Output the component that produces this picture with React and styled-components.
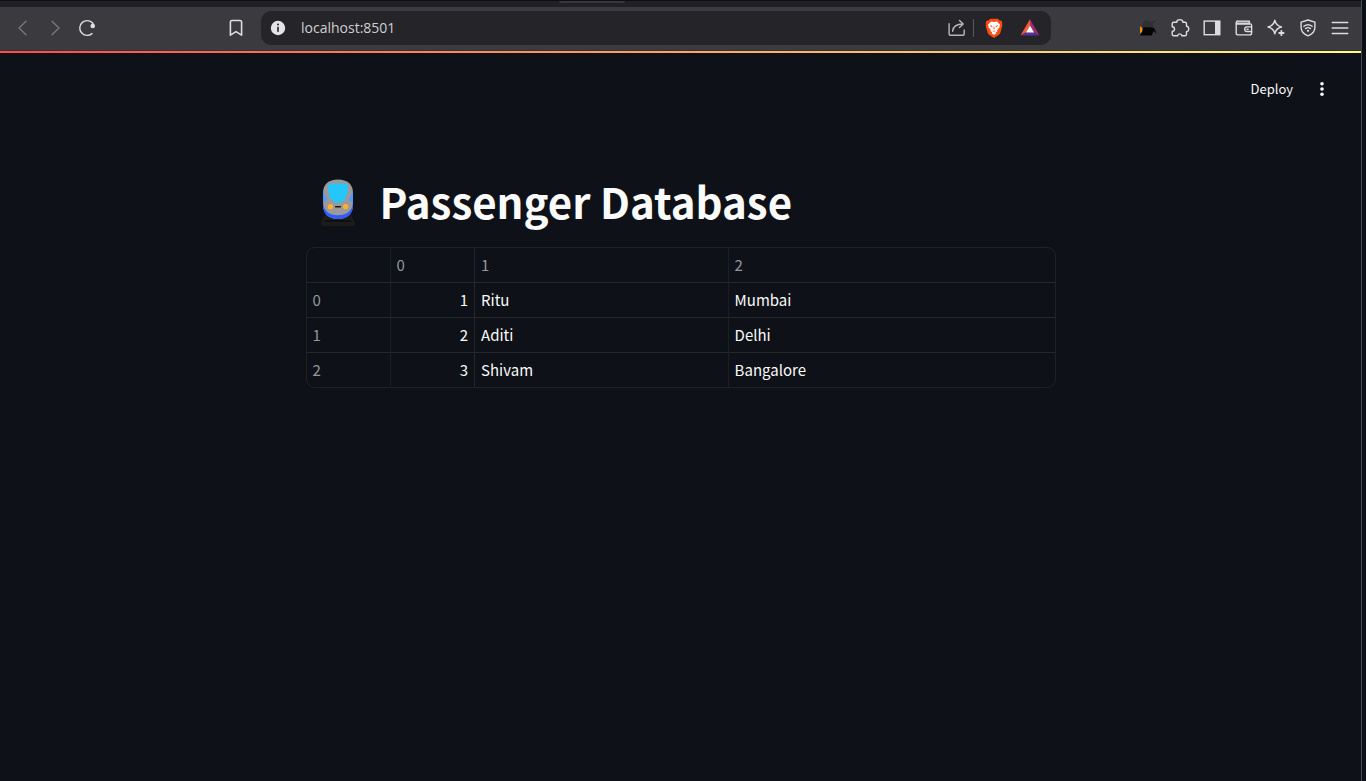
import React from "react";
import styled, { createGlobalStyle } from "styled-components";

const GlobalStyle = createGlobalStyle`
  * { box-sizing: border-box; }
  body {
    margin: 0;
    background: #0c0f17;
    color: #fafafa;
    font-family: "Noto Sans CJK SC", "Open Sans", sans-serif;
  }
`;

const BrowserWindow = styled.div`
  min-height: 100vh;
  margin-right: 4px;
  border-right: 1px solid #47474f;
  background: #0e1117;
`;

const TabStrip = styled.div`
  height: 7px;
  border-top: 1px solid #0c0f1a;
  background: #222024;
`;

const TabHandle = styled.div`
  width: 66px;
  height: 2px;
  margin: 0 auto;
  transform: translateX(-89px);
  border-radius: 0 0 4px 4px;
  background: #38363b;
`;

const Toolbar = styled.nav`
  display: grid;
  grid-template-columns: 220px minmax(0, 1fr) 310px;
  align-items: center;
  height: 44px;
  padding-bottom: 1px;
  border-bottom: 1px solid #323136;
  background: #3b3a3e;
`;

const ToolGroup = styled.div`
  display: flex;
  justify-content: ${(p) => (p.$end ? "flex-end" : "flex-start")};
  padding: 0 5px 0 7px;
`;

const IconButton = styled.button`
  display: flex;
  align-items: center;
  justify-content: center;
  flex: none;
  width: ${(p) => p.$width || 32}px;
  height: 32px;
  padding: 0;
  border: 0;
  background: none;
  color: ${(p) => (p.$dim ? "#77767b" : "#dddce0")};
  svg { display: block; }
`;

const AddressArea = styled.div`
  display: flex;
  align-items: center;
  gap: 9px;
`;

const AddressBar = styled.div`
  display: flex;
  flex: 1;
  align-items: center;
  min-width: 0;
  height: 34px;
  padding: 0 3px 0 1px;
  border-radius: 10px;
  background: #252429;
`;

const AddressInput = styled.input`
  flex: 1;
  min-width: 0;
  padding: 0;
  margin-left: 7px;
  border: 0;
  outline: 0;
  background: none;
  color: #cfced3;
  font: 14px/20px "Open Sans", "Noto Sans", sans-serif;
`;

const Separator = styled.span`
  width: 1px;
  height: 18px;
  margin-right: 2px;
  background: #5a595e;
`;

const Decoration = styled.div`
  height: 2px;
  background: linear-gradient(90deg, #ff4b4b, #fffd80);
`;

const AppHeader = styled.header`
  display: flex;
  align-items: center;
  justify-content: flex-end;
  height: 72px;
  padding: 0 23px;
`;

const DeployButton = styled.button`
  height: 28px;
  padding: 0 13px;
  border: 0;
  background: none;
  color: #fafafa;
  font: 13px/28px "Noto Sans CJK SC", sans-serif;
`;

const Content = styled.main`
  max-width: 750px;
  margin: 0 auto;
  padding: 46px 0 64px;
`;

const Heading = styled.h1`
  display: flex;
  align-items: center;
  gap: 10px;
  height: 60px;
  margin: 0 0 16px;
  font-size: 42px;
  line-height: 60px;
  font-weight: 700;
  white-space: nowrap;
`;

const TableFrame = styled.div`
  overflow: hidden;
  border: 1px solid #202226;
  border-radius: 9px;
`;

const DataTable = styled.table`
  width: 100%;
  table-layout: fixed;
  border-collapse: separate;
  border-spacing: 0;
  font-size: 15px;
  line-height: 24px;
`;

const Column = styled.col`
  width: ${(p) => p.$width};
`;

const Cell = styled.td`
  height: ${(p) => (p.$head ? 34 : 35)}px;
  padding: 0 6px;
  border: 0 solid #25272b;
  border-top-width: ${(p) => (p.$head ? 0 : 1)}px;
  border-left-width: ${(p) => (p.$first ? 0 : 1)}px;
  border-left-color: ${(p) => (p.$faint ? "#1b1e23" : "#25272b")};
  color: ${(p) => (p.$muted ? "#96979b" : "#fafafa")};
  font-weight: 400;
  text-align: ${(p) => (p.$numeric ? "right" : "left")};
`;

const Svg = ({ size = 20, children, ...rest }) => (
  <svg
    width={size}
    height={size}
    viewBox="0 0 20 20"
    fill="none"
    stroke="currentColor"
    strokeWidth="1.4"
    strokeLinecap="round"
    strokeLinejoin="round"
    aria-hidden="true"
    {...rest}
  >
    {children}
  </svg>
);

const BackIcon = () => <Svg><path d="M13 3.2 6 10l7 6.8" /></Svg>;
const ForwardIcon = () => <Svg><path d="m7 3.2 7 6.8-7 6.8" /></Svg>;
const ReloadIcon = () => (
  <Svg>
    <path d="M15.8 5.2A7.4 7.4 0 1 0 15 15.6" />
    <circle cx="15.7" cy="8" r="2.3" fill="currentColor" stroke="none" />
    <path d="M15.6 5.2 17 8" />
  </Svg>
);
const BookmarkIcon = () => (
  <Svg strokeWidth="1.6"><path d="M4.4 4.1c0-1 .6-1.6 1.6-1.6h8c1 0 1.6.6 1.6 1.6v13.1L10 13.6l-5.6 3.6z" /></Svg>
);
const InfoIcon = () => (
  <Svg stroke="none">
    <circle cx="10" cy="10" r="7.2" fill="#e4e3e8" />
    <circle cx="10" cy="6.6" r="1" fill="#252429" />
    <rect x="9.2" y="8.8" width="1.6" height="5" fill="#252429" />
  </Svg>
);
const ShareIcon = () => (
  <Svg stroke="#b6b5ba">
    <path d="M2.1 5.6v9.8c0 1.1.8 1.9 1.9 1.9h11.3c1.1 0 1.9-.8 1.9-1.9V12" />
    <path d="M5.6 13.2c.4-4.5 2.8-7.2 10.4-7.2M12.5 2.5 16.2 6l-3.7 3.6" />
  </Svg>
);
const BraveIcon = () => (
  <Svg stroke="none">
    <path d="M6.1.7h7.8l1.7 1.9 1.4-.2 1.4 2-.5 1.7.5 1.5-2 7.2c-.3 1-1 1.7-1.8 2.3L10 20l-4.6-2.9c-.8-.6-1.5-1.3-1.8-2.3l-2-7.2.5-1.5-.5-1.7 1.4-2 1.4.2z" fill="#fb4b12" />
    <path d="m10 4.1 2.9-.6 3.2 3.2-.7 1.3.2 1.3-2.4 2.7.3 1.3-1.8 1 .7.9L10 17l-2.4-1.8.7-.9-1.8-1 .3-1.3-2.4-2.7.2-1.3-.7-1.3 3.2-3.2z" fill="#fff" />
    <path d="m5.7 7.2 3 .8-1.1 1.2zm8.6 0-3 .8 1.1 1.2zM10 7.7l-.7 3.1.7.6.7-.6zM8.2 12.2l1.8.8 1.8-.8-1.8 1.7z" fill="#fb4b12" />
  </Svg>
);
const BatIcon = () => (
  <Svg stroke="none">
    <path d="M10 1.3 10 7.5 6 14.3.5 17.5z" fill="#ff5a32" />
    <path d="M10 1.3 19.5 17.5 14 14.3 10 7.5z" fill="#a32a72" />
    <path d="M.5 17.5h19L14 14.3H6z" fill="#553295" />
    <path d="m10 7.4 4.1 7H5.9z" fill="#fff" />
  </Svg>
);
const ExtensionIcon = () => (
  <Svg stroke="none">
    <path d="M4.8 4.2c2-1.6 4.2-2 6-1.2l2.3 1 4.7-1.9-.9 2.2-2.4 1.5.6 3.3H4.4z" fill="#302f32" />
    <path d="M2 8.2c1.6.8 2.6 2 2.6 3.6S3.6 14.800 2 15.4z" fill="#ff8a12" />
    <path d="M5.4 9.200h7.600l3 .9 1.200 1.800 1.400 4-2.900-2.800-2.100 4.500H2.100l2.400-4.600z" fill="#060505" />
  </Svg>
);
const PuzzleIcon = () => (
  <Svg>
    <path d="M2.2 5.8c0-1 .6-1.6 1.6-1.6h2.9c.1-3.4 6.1-3.4 6.2 0h2c1 0 1.6.6 1.6 1.6v2.500c3 .4 3 5 0 5.400v2.500c0 1-.6 1.600-1.600 1.600h-3c-.3-2.600-4-2.600-4.300 0H3.800c-1 0-1.600-.6-1.600-1.600v-2.700c3.100-.2 3.100-4.600 0-4.800z" />
  </Svg>
);
const SidebarIcon = () => (
  <Svg strokeLinejoin="miter">
    <rect x="2.2" y="3.1" width="15.6" height="13.6" />
    <path d="M13 3h5v14h-5z" fill="currentColor" stroke="none" />
  </Svg>
);
const WalletIcon = () => (
  <Svg>
    <path d="M4 3.1h11.4v2.8H3.6A1.4 1.4 0 0 1 4 3.1z" fill="#8d8c91" />
    <path d="M2.2 4.7v10.2c0 1.2.8 2 2 2h11.4c1.2 0 2-.8 2-2V7.3c0-.9-.5-1.4-1.4-1.4H3.5" />
    <path d="M17.6 8.9H13a2.3 2.3 0 0 0 0 4.6h4.6M13 11.2h1.2" />
  </Svg>
);
const SparkleIcon = () => (
  <Svg>
    <path d="M8.8 2.2c.7 3.700 2.500 5.800 6.700 6.800-4.200 1-6 3-6.700 6.800C8.100 12 6.200 10 2 9c4.200-1 6.100-3.100 6.800-6.800z" />
    <path d="M15.400 12.800v4.400M13.200 15h4.400" strokeWidth="1.8" />
  </Svg>
);
const ShieldIcon = () => (
  <Svg>
    <path d="m10 2 6.900 2.200v5.100c0 4.100-2.500 6.900-6.900 8.500-4.400-1.600-6.900-4.400-6.900-8.500V4.200z" />
    <path d="M5.900 8.300c2.500-2 5.700-2 8.200 0M7.500 10.600c1.500-1.200 3.500-1.200 5 0" />
    <circle cx="10" cy="12.8" r="1.1" fill="currentColor" stroke="none" />
  </Svg>
);
const MenuIcon = () => <Svg><path d="M2.2 4.5h15.6M2.2 10h15.6M2.2 15.5h15.6" /></Svg>;
const MoreIcon = () => (
  <Svg stroke="none">
    <g fill="#fafafa">
      <circle cx="10" cy="4.700" r="1.8" />
      <circle cx="10" cy="10" r="1.8" />
      <circle cx="10" cy="15.300" r="1.8" />
    </g>
  </Svg>
);
const TrainIcon = () => (
  <svg width="64" height="56" viewBox="0 -4 64 56" role="img" aria-label="Train">
    <path d="M20 36h24l4.8 9.3c1 2-.1 3.7-2.3 3.700h-29c-2.200 0-3.300-1.700-2.300-3.700z" fill="#1c1c1c" />
    <path d="M19 44h26" stroke="#080a0d" strokeWidth="1.3" />
    <path d="M17 16C17 7.500 22.500 2.500 32 2.500S47 7.500 47 16v12c0 8.400-5.400 14-15 14s-15-5.600-15-14z" fill="#9a9a9a" />
    <path d="M17 13c1.400 4.200 2.200 7.300 4.600 9.700L17 26zM47 13c-1.400 4.200-2.200 7.300-4.600 9.700L47 26z" fill="#5596ff" />
    <path d="M17 25.500v3.200C17 36.700 22.500 42 32 42s15-5.300 15-13.300v-3.200C46.300 34.200 40.700 38.200 32 38.200S17.700 34.200 17 25.500z" fill="#315aff" />
    <path d="M26 6.500h12c2.500 0 4 1.700 4 4.200 0 8.600-3.500 15-10 15s-10-6.400-10-15c0-2.500 1.500-4.200 4-4.200z" fill="#25c7fb" />
    <circle cx="24.4" cy="29.700" r="2.6" fill="#ffb02e" />
    <circle cx="39.6" cy="29.700" r="2.6" fill="#ffb02e" />
    <path d="M29.600 29.700h4.800" stroke="#1c1c1c" strokeWidth="1.4" strokeLinecap="round" />
  </svg>
);

const navigation = [
  { label: "Back", Icon: BackIcon, dim: true },
  { label: "Forward", Icon: ForwardIcon, dim: true },
  { label: "Reload", Icon: ReloadIcon },
];

const tools = [
  { label: "Pinned extension", Icon: ExtensionIcon },
  { label: "Extensions", Icon: PuzzleIcon },
  { label: "Sidebar", Icon: SidebarIcon },
  { label: "Wallet", Icon: WalletIcon },
  { label: "AI assistant", Icon: SparkleIcon },
  { label: "VPN", Icon: ShieldIcon },
  { label: "Menu", Icon: MenuIcon },
];

const passengers = [
  [1, "Ritu", "Mumbai"],
  [2, "Aditi", "Delhi"],
  [3, "Shivam", "Bangalore"],
];

const ToolButtons = ({ items }) =>
  items.map(({ label, Icon, dim }) => (
    <IconButton key={label} type="button" aria-label={label} $dim={dim}>
      <Icon />
    </IconButton>
  ));

export default function App() {
  return (
    <>
      <GlobalStyle />
      <BrowserWindow>
        <TabStrip><TabHandle /></TabStrip>
        <Toolbar>
          <ToolGroup><ToolButtons items={navigation} /></ToolGroup>
          <AddressArea>
            <IconButton type="button" aria-label="Bookmark"><BookmarkIcon /></IconButton>
            <AddressBar>
              <IconButton type="button" aria-label="Site information"><InfoIcon /></IconButton>
              <AddressInput aria-label="Address" defaultValue="localhost:8501" />
              <IconButton type="button" aria-label="Share"><ShareIcon /></IconButton>
              <Separator />
              <IconButton type="button" aria-label="Brave Shields" $width={36}><BraveIcon /></IconButton>
              <IconButton type="button" aria-label="Rewards" $width={36}><BatIcon /></IconButton>
            </AddressBar>
          </AddressArea>
          <ToolGroup $end><ToolButtons items={tools} /></ToolGroup>
        </Toolbar>
        <Decoration />
        <AppHeader>
          <DeployButton type="button">Deploy</DeployButton>
          <IconButton type="button" aria-label="Main menu"><MoreIcon /></IconButton>
        </AppHeader>
        <Content>
          <Heading><TrainIcon />Passenger Database</Heading>
          <TableFrame>
            <DataTable>
              <colgroup>
                <Column $width="11.1%" />
                <Column $width="11.3%" />
                <Column $width="33.9%" />
                <Column $width="43.7%" />
              </colgroup>
              <thead>
                <tr>
                  <Cell $head $first />
                  {[0, 1, 2].map((n) => (
                    <Cell as="th" scope="col" key={n} $head $muted $faint={n !== 1}>{n}</Cell>
                  ))}
                </tr>
              </thead>
              <tbody>
                {passengers.map(([id, name, city], index) => (
                  <tr key={id}>
                    <Cell as="th" scope="row" $first $muted>{index}</Cell>
                    <Cell $numeric $faint>{id}</Cell>
                    <Cell>{name}</Cell>
                    <Cell $faint>{city}</Cell>
                  </tr>
                ))}
              </tbody>
            </DataTable>
          </TableFrame>
        </Content>
      </BrowserWindow>
    </>
  );
}
